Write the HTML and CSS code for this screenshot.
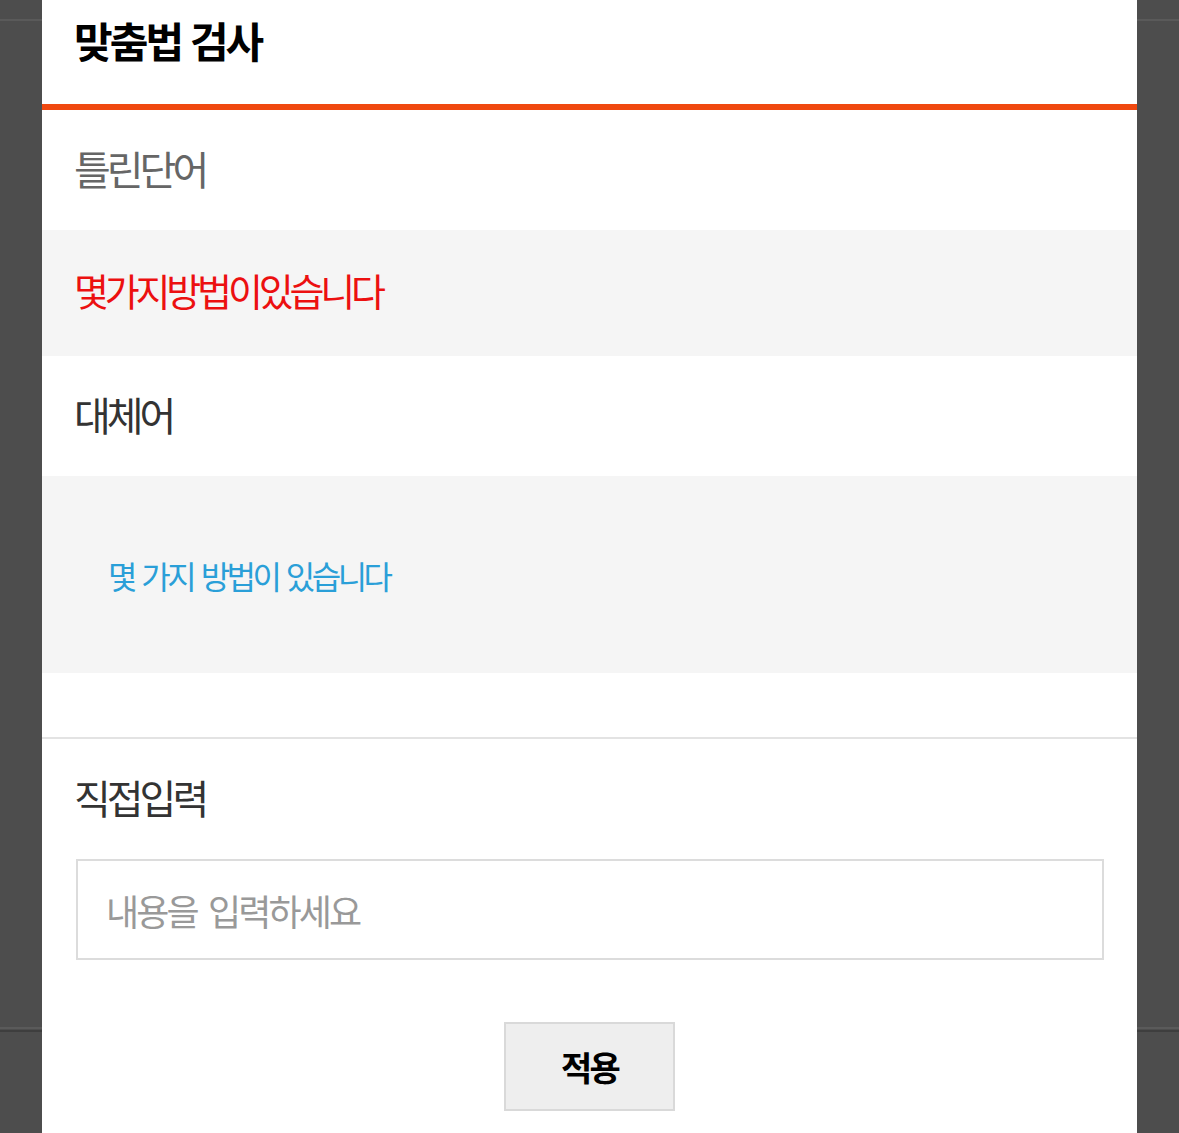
FILE: index.html
```html
<!DOCTYPE html>
<html lang="ko">
<head>
	<meta charset="utf-8" />
	<title>맞춤법 검사</title>
	<link rel="stylesheet" href="styles.css">
</head>
<body>
<div class="dim">
	<div class="popup">
		<header class="popup-head">
			<h1>맞춤법 검사</h1>
		</header>

		<div class="label label-wrong">틀린단어</div>
		<div class="box box-wrong">
			<p class="wrong-word">몇가지방법이있습니다</p>
		</div>

		<div class="label">대체어</div>
		<div class="box box-suggest">
			<p class="suggest-word">몇 가지 방법이 있습니다</p>
		</div>

		<div class="direct">
			<div class="label label-direct">직접입력</div>
			<input class="direct-input" type="text" placeholder="내용을 입력하세요">
			<div class="btn-row">
				<button class="btn-apply">적용</button>
			</div>
		</div>
	</div>
</div>
</body>
</html>
```

FILE: styles.css
```css
*{
	box-sizing:border-box;
	font-family:"Noto Sans CJK KR", "Noto Sans", sans-serif;
}

html, body{
	margin:0;
	height:100%;
	overflow:hidden;
}

body{
	background-color:#4d4d4d;
	background-image:
		linear-gradient(#5a5a5a, #5a5a5a),
		linear-gradient(#5a5a5a, #5a5a5a),
		linear-gradient(#3e3e3e, #3e3e3e);
	background-repeat:no-repeat;
	background-size:100% 2px, 100% 2px, 100% 2px;
	background-position:0 19px, 0 1027px, 0 1030px;
}

.dim{
	padding-left:42px;
}

.popup{
	width:1095px;
	min-height:1133px;
	background:#fff;
}

.popup-head{
	height:110px;
	border-bottom:6px solid #f0480f;
	padding-left:32px;
	display:flex;
	align-items:center;
	padding-bottom:26px;
}

h1{
	margin:0;
	font-size:42px;
	font-weight:bold;
	color:#000;
	letter-spacing:-0.07em;
}

.label{
	height:120px;
	padding-left:32px;
	padding-bottom:4px;
	display:flex;
	align-items:center;
	font-size:40px;
	color:#333;
	letter-spacing:-0.1em;
}

.label-wrong{
	color:#666;
}

.box{
	background:#f5f5f5;
	display:flex;
	align-items:center;
}

.box p{
	margin:0;
}

.box-wrong{
	height:126px;
	padding-left:32px;
	padding-bottom:8px;
}

.wrong-word{
	font-size:38px;
	color:#ec1010;
	letter-spacing:-0.11em;
}

.box-suggest{
	height:197px;
	padding-left:66px;
}

.suggest-word{
	font-size:32px;
	color:#2a9fd8;
	letter-spacing:-0.11em;
	word-spacing:2px;
}

.direct{
	margin-top:64px;
	border-top:2px solid #e3e3e3;
	padding:0 34px;
}

.label-direct{
	padding-left:0;
	margin-left:-2px;
}

.direct-input{
	display:block;
	width:1028px;
	height:101px;
	border:2px solid #dcdcdc;
	padding:0 28px;
	font-size:36px;
	letter-spacing:-0.08em;
	word-spacing:4px;
	outline:none;
}

.direct-input::placeholder{
	color:#999;
}

.btn-row{
	display:flex;
	justify-content:center;
	padding-top:62px;
}

.btn-apply{
	width:171px;
	height:89px;
	background:#eee;
	border:2px solid #d9d9d9;
	font-size:34px;
	font-weight:bold;
	color:#000;
	letter-spacing:-0.08em;
}
```
